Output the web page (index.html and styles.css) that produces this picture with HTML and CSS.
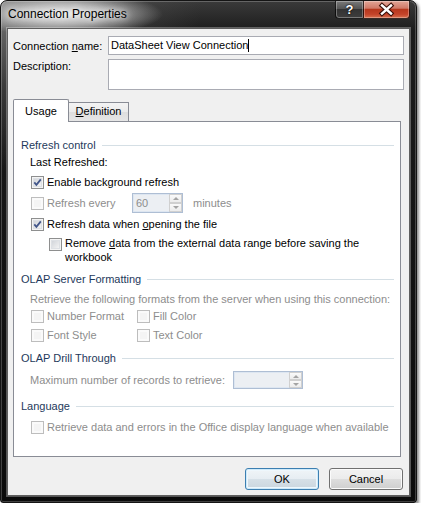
FILE: index.html
```html
<!DOCTYPE html>
<html lang="en">
<head>
    <meta charset="UTF-8">
    <title>Connection Properties</title>
    <link rel="stylesheet" href="styles.css">
</head>
<body>

<!-- Вікно діалогу -->
<div class="window">
    <div class="titlebar">
        <span class="title">Connection Properties</span>
        <div class="caption-buttons">
            <span class="cap-btn help">?</span>
            <span class="cap-btn close">
                <svg width="45" height="17" viewBox="0 0 45 17">
                    <path d="M18 4.5 L27 12.5 M27 4.5 L18 12.5" stroke="#3b0f08" stroke-width="4.6" stroke-linecap="square"/>
                    <path d="M18 4.5 L27 12.5 M27 4.5 L18 12.5" stroke="#fff" stroke-width="2.4" stroke-linecap="square"/>
                </svg>
            </span>
        </div>
    </div>

    <div class="client">
        <div class="field-row">
            <label class="field-label">Connection <u>n</u>ame:</label>
            <div class="textbox">DataSheet View Connection<span class="caret"></span></div>
        </div>
        <div class="field-row desc-row">
            <label class="field-label">Description:</label>
            <div class="textbox textarea"></div>
        </div>

        <!-- Вкладки -->
        <div class="tabs">
            <div class="tab active">Usa<u>g</u>e</div>
            <div class="tab"><u>D</u>efinition</div>
        </div>

        <div class="panel">
            <div class="group-head">Refresh control</div>
            <div class="row mt-1">Last Refreshed:</div>
            <div class="row cb-row mt-4">
                <span class="cb"><svg width="11" height="11" viewBox="0 0 11 11"><path d="M2.3 5.4 L4.4 7.8 L8.8 2.4" fill="none" stroke="#42568a" stroke-width="1.8"/></svg></span>
                <span>Enable back<u>g</u>round refresh</span>
            </div>
            <div class="row cb-row every-row mt-3 off">
                <span class="every-label"><span class="cb dis"></span><span>Refresh every</span></span>
                <span class="spin spin-small">
                    <span class="spin-value">60</span>
                    <span class="spin-btns"><span class="up"></span><span class="down"></span></span>
                </span>
                <span class="minutes">minutes</span>
            </div>
            <div class="row cb-row mt-3">
                <span class="cb"><svg width="11" height="11" viewBox="0 0 11 11"><path d="M2.3 5.4 L4.4 7.8 L8.8 2.4" fill="none" stroke="#42568a" stroke-width="1.8"/></svg></span>
                <span>Refresh data when <u>o</u>pening the file</span>
            </div>
            <div class="row cb-row sub-row mt-4">
                <span class="cb"></span>
                <span class="wrap-text">Remove <u>d</u>ata from the external data range before saving the<br>workbook</span>
            </div>

            <div class="group-head mt-7">OLAP Server Formatting</div>
            <div class="row mt-4 off">Retrieve the following formats from the server when using this connection:</div>
            <div class="row cb-row mt-1 off">
                <span class="cell first"><span class="cb dis"></span><span>Number Format</span></span>
                <span class="cell"><span class="cb dis"></span><span>Fill Color</span></span>
            </div>
            <div class="row cb-row mt-3 off">
                <span class="cell first"><span class="cb dis"></span><span>Font Style</span></span>
                <span class="cell"><span class="cb dis"></span><span>Text Color</span></span>
            </div>

            <div class="group-head mt-7">OLAP Drill Through</div>
            <div class="row max-row mt-5 off">
                <span class="max-label">Maximum number of records to retrieve:</span>
                <span class="spin spin-wide">
                    <span class="spin-value"></span>
                    <span class="spin-btns"><span class="up"></span><span class="down"></span></span>
                </span>
            </div>

            <div class="group-head mt-9">Language</div>
            <div class="row cb-row mt-5 off">
                <span class="cb dis"></span>
                <span>Retrieve data and errors in the Office display language when available</span>
            </div>
        </div>

        <div class="dialog-buttons">
            <button class="btn default">OK</button>
            <button class="btn">Cancel</button>
        </div>
    </div>
</div>

</body>
</html>
```

FILE: styles.css
```css
* {
    box-sizing: border-box;
}

body {
    margin: 0;
    background-color: #fff;
    font-family: "Liberation Sans", Arial, sans-serif;
    font-size: 11px;
    color: #000;
}

u {
    text-decoration: underline;
    text-underline-offset: 1px;
}

/* Рамка вікна */
.window {
    width: 417px;
    height: 503px;
    display: flex;
    flex-direction: column;
    border: 1px solid #141414;
    border-radius: 7px 7px 3px 3px;
    background:
        radial-gradient(ellipse 100px 22px at 62px 13px, rgba(242, 242, 242, 0.95) 0, rgba(205, 205, 205, 0.8) 45%, rgba(150, 150, 150, 0) 100%),
        radial-gradient(ellipse 200px 170px at 0 0, rgba(130, 130, 130, 0.9) 0, rgba(85, 85, 85, 0.55) 50%, rgba(0, 0, 0, 0) 100%),
        linear-gradient(180deg, #3a3a3a 0, #1c1c1c 30px, #0b0b0b 100%);
    box-shadow: inset 0 0 0 1px rgba(255, 255, 255, 0.22), 2px 2px 3px rgba(0, 0, 0, 0.45);
}

.titlebar {
    height: 27px;
    display: flex;
    align-items: flex-start;
}

.title {
    padding-left: 7px;
    line-height: 26px;
    font-size: 12px;
    color: #000;
    text-shadow: 0 0 6px #fff, 0 0 10px rgba(255, 255, 255, 0.8);
}

.caption-buttons {
    margin-left: auto;
    margin-right: 6px;
    display: flex;
}

.cap-btn {
    height: 18px;
    display: flex;
    align-items: center;
    justify-content: center;
    border: 1px solid rgba(0, 0, 0, 0.75);
    border-top: none;
    box-shadow: inset 0 0 0 1px rgba(255, 255, 255, 0.3);
}

.help {
    width: 28px;
    border-right: none;
    border-radius: 0 0 0 4px;
    background: linear-gradient(180deg, #7a7a7a 0, #555 45%, #333 50%, #3e3e3e 100%);
    color: #fff;
    font-weight: bold;
    font-size: 13px;
    text-shadow: 0 0 2px #000, 0 0 1px #000;
}

.close {
    width: 47px;
    border-radius: 0 0 4px 0;
    background: linear-gradient(180deg, #e2a597 0, #d07a68 42%, #b7381e 50%, #c4432a 78%, #d8704e 100%);
}

/* Робоча область */
.client {
    flex: 1;
    margin: 0 6px 6px;
    padding: 7px 5px 0;
    display: flex;
    flex-direction: column;
    border: 1px solid #5f5f5f;
    background-color: #f0f0f0;
    box-shadow: 0 0 0 1px rgba(255, 255, 255, 0.3);
}

.field-row {
    display: flex;
    align-items: center;
}

.field-label {
    width: 95px;
    line-height: 14px;
}

.textbox {
    flex: 1;
    height: 19px;
    padding-left: 2px;
    line-height: 17px;
    border: 1px solid #a9abb3;
    background-color: #fff;
}

.caret {
    display: inline-block;
    width: 1px;
    height: 13px;
    background-color: #000;
    vertical-align: -3px;
}

.desc-row {
    margin-top: 4px;
    align-items: flex-start;
}

.textarea {
    height: 31px;
}

/* Вкладки */
.tabs {
    margin-top: 9px;
    display: flex;
    align-items: flex-start;
}

.tab {
    text-align: center;
    line-height: 15px;
    border: 1px solid #898c95;
    border-bottom: none;
}

.tab.active {
    position: relative;
    z-index: 1;
    width: 56px;
    height: 23px;
    padding-top: 4px;
    background-color: #fff;
    border-radius: 2px 2px 0 0;
}

.tab:not(.active) {
    width: 61px;
    height: 19px;
    margin-top: 3px;
    margin-left: -1px;
    padding-top: 1px;
    background: linear-gradient(180deg, #f3f3f3 0, #ebebeb 50%, #dedede 51%, #e6e6e6 100%);
}

.panel {
    height: 336px;
    margin: -1px 3px 0 0;
    padding: 15px 6px 0 7px;
    border: 1px solid #898c95;
    background-color: #fff;
}

.group-head {
    height: 16px;
    display: flex;
    align-items: center;
    color: #1e395b;
}

.group-head::after {
    content: '';
    flex: 1;
    margin-left: 6px;
    border-top: 1px solid #d5dfe5;
}

.row {
    height: 16px;
    display: flex;
    align-items: center;
    padding-left: 9px;
}

.cb-row {
    padding-left: 10px;
    gap: 3px;
}

.off {
    color: #8d8d8d;
}

.mt-1 { margin-top: 1px; }
.mt-3 { margin-top: 3px; }
.mt-4 { margin-top: 4px; }
.mt-5 { margin-top: 5px; }
.mt-7 { margin-top: 7px; }
.mt-9 { margin-top: 9px; }

/* Прапорці */
.cb {
    width: 13px;
    height: 13px;
    flex: none;
    border: 1px solid #8e8f8f;
    background: linear-gradient(135deg, #c9cdd3 0, #f4f4f4 85%);
    box-shadow: inset 0 0 0 1px #f4f4f4, inset 0 0 0 2px #dde0e4;
}

.cb svg {
    display: block;
}

.cb.dis {
    border-color: #bdbdbd;
    background: #f4f4f4;
    box-shadow: inset 0 0 0 2px #fafafa;
}

.every-row {
    height: 20px;
    gap: 0;
}

.every-label {
    width: 101px;
    display: flex;
    align-items: center;
    gap: 3px;
}

.minutes {
    margin-left: 10px;
}

.sub-row {
    height: 28px;
    padding-left: 28px;
    align-items: flex-start;
    line-height: 14px;
}

.sub-row .cb {
    margin-top: 2px;
}

.wrap-text {
    max-width: 310px;
}

.cell {
    display: flex;
    align-items: center;
    gap: 3px;
}

.cell.first {
    width: 103px;
}

.max-row {
    height: 18px;
}

.max-label {
    width: 203px;
}

/* Лічильники */
.spin {
    display: flex;
    border: 1px solid #aebed4;
    background-color: #eceff3;
    box-shadow: inset 0 0 0 1px #dde6f1;
}

.spin-small {
    width: 51px;
    height: 20px;
}

.spin-wide {
    width: 70px;
    height: 18px;
}

.spin-value {
    flex: 1;
    padding-left: 3px;
    line-height: 18px;
}

.spin-btns {
    width: 13px;
    display: flex;
    flex-direction: column;
    background-color: #fff;
}

.spin-btns span {
    flex: 1;
    display: flex;
    align-items: center;
    justify-content: center;
    border: 1px solid #d0d0d0;
    background: linear-gradient(180deg, #fafafa, #ececec);
}

.spin-btns span::before {
    content: '';
    border-left: 3px solid transparent;
    border-right: 3px solid transparent;
}

.spin-btns .up::before {
    border-bottom: 3px solid #a4a4a4;
}

.spin-btns .down::before {
    border-top: 3px solid #a4a4a4;
}

/* Кнопки */
.dialog-buttons {
    margin-top: 11px;
    margin-right: 1px;
    display: flex;
    justify-content: flex-end;
    gap: 10px;
}

.btn {
    width: 74px;
    height: 22px;
    padding: 0;
    font-family: "Liberation Sans", Arial, sans-serif;
    font-size: 11px;
    color: #000;
    border: 1px solid #707070;
    border-radius: 3px;
    background: linear-gradient(180deg, #f2f2f2 0, #ebebeb 50%, #dddddd 51%, #cfcfcf 100%);
    box-shadow: inset 0 0 0 1px #fbfbfb;
}

.btn.default {
    border-color: #3c7fb1;
    background: linear-gradient(180deg, #f0f5f8 0, #e6edf2 50%, #d6e0e7 51%, #cad6df 100%);
    box-shadow: inset 0 0 0 1px #cfeafa, inset 0 0 0 2px #eef7fc;
}
```
